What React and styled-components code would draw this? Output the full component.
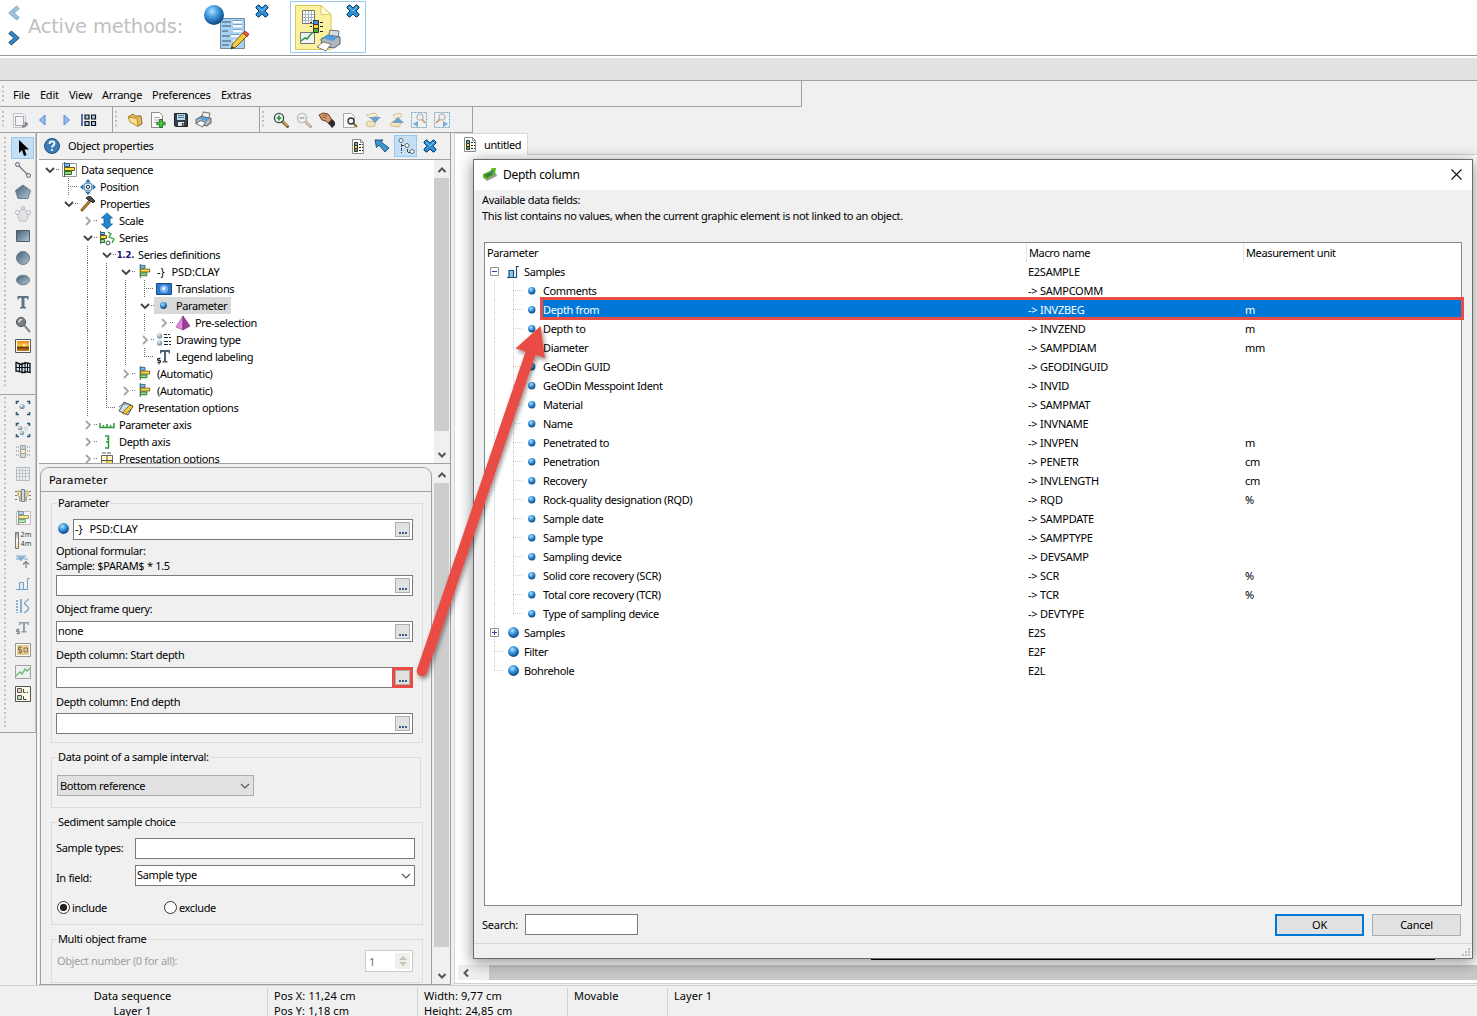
import React from 'react';
import styled, { createGlobalStyle, css } from 'styled-components';

const GlobalStyle = createGlobalStyle`
  *, *::before, *::after { box-sizing: border-box; }
  html, body { margin: 0; padding: 0; overflow: hidden; }
  body {
    background: #f0f0f0;
    color: #000;
    font-family: 'Noto Sans', 'Liberation Sans', sans-serif;
    font-size: 11px;
    line-height: 15px;
    letter-spacing: -0.37px;
    word-spacing: 0.15px;
  }
`;

/* ---------- frame ---------- */
const Window = styled.div`
  position: relative;
  width: 1477px;
  height: 1016px;
  overflow: hidden;
  display: flex;
  flex-direction: column;
  background: #f0f0f0;
  white-space: nowrap;
`;
const Svg = styled.svg`
  display: block;
  flex: none;
  overflow: visible;
  opacity: ${(p) => p.$o || 1};
`;
const Defs = styled.svg`
  position: absolute;
  width: 0;
  height: 0;
`;
const Header = styled.header`
  height: 58px;
  flex: none;
  display: flex;
  background: linear-gradient(#fff 55px, #989898 55px, #989898 56px, #fff 56px);
`;
const History = styled.div`
  width: 28px;
  padding: 6px 0 0 7px;
  display: flex;
  flex-direction: column;
  gap: 11px;
`;
const HeaderTitle = styled.div`
  width: 168px;
  padding-top: 14px;
  font: 19.5px/26px 'DejaVu Sans', 'Liberation Sans', sans-serif;
  letter-spacing: -0.25px;
  color: #bfbfbf;
`;
const Method = styled.div`
  width: 76px;
  height: 52px;
  margin: 1px 18px 0 0;
  padding: 2px 3px;
  display: flex;
  border: 1px solid ${(p) => (p.$active ? '#99c9ef' : 'transparent')};
`;
const MethodClose = styled.div`
  padding-left: ${(p) => p.$gap}px;
`;
const Band = styled.div`
  height: 23px;
  flex: none;
  background: #e2e2e2;
  border-bottom: 1px solid #a0a0a0;
`;
const MenuBar = styled.nav`
  width: 802px;
  height: 26px;
  flex: none;
  display: flex;
  align-items: center;
  padding: 2px 0 0 2px;
  letter-spacing: -0.25px;
  border: solid #a0a0a0;
  border-width: 0 1px 1px 0;
`;
const Grip = styled.div`
  flex: none;
  width: 3px;
  height: ${(p) => p.$h || 18}px;
  background-image: linear-gradient(#bcbcbc 2px, transparent 2px);
  background-size: 2px 4.500px;
  background-repeat: repeat-y;
`;
const MenuItem = styled.span`
  width: ${(p) => p.$w}px;
`;
const MenuItems = styled.div`
  display: flex;
  padding-left: 8px;
`;
const ToolRow = styled.div`
  height: 26px;
  flex: none;
  display: flex;
`;
const ToolGroup = styled.div`
  width: ${(p) => p.$w}px;
  padding-left: 2px;
  display: flex;
  align-items: center;
  border: solid #a0a0a0;
  border-width: 0 1px 1px 0;
`;
const ToolSlots = styled.div`
  display: flex;
  padding-left: ${(p) => p.$pad}px;
`;
const ToolSlot = styled.div`
  width: 23px;
  height: 22px;
  display: flex;
  align-items: center;
  justify-content: center;
  ${(p) => p.$on && css`background: #c2dff5; box-shadow: inset 0 0 0 1px #99c9ef;`}
`;
const Main = styled.main`
  height: 852px;
  flex: none;
  display: flex;
`;

/* ---------- left tool strip ---------- */
const Strip = styled.aside`
  width: 37px;
  flex: none;
  border-right: 1px solid #a0a0a0;
`;
const StripGroup = styled.div`
  height: ${(p) => p.$h}px;
  width: 36px;
  padding: ${(p) => p.$top}px 0 0 4px;
  display: flex;
  border: solid #a0a0a0;
  border-width: 0 1px 1px 0;
  border-right-color: #c4c4c4;
`;
const StripSlots = styled.div`
  padding-left: 4px;
`;

/* ---------- property panel ---------- */
const Props = styled.section`
  width: 413px;
  flex: none;
  margin-left: 1px;
  border-left: 1px solid #fff;
  border-right: 1px solid #a0a0a0;
  padding-top: 1px;
  display: flex;
  flex-direction: column;
`;
const PropsHeader = styled.div`
  height: 26px;
  flex: none;
  display: flex;
  align-items: center;
  padding: 0 0 2px 5px;
  border-bottom: 1px solid #a0a0a0;
`;
const PropsTitle = styled.div`
  width: 286px;
  padding-left: 8px;
  letter-spacing: -0.27px;
`;
const HeaderSlots = styled.div`
  display: flex;
  gap: 1px;
`;
const TreeArea = styled.div`
  height: 304px;
  flex: none;
  display: flex;
  background: #fff;
  border-bottom: 1px solid #a0a0a0;
`;
const Tree = styled.div`
  flex: 1;
  overflow: hidden;
  padding: 1px 0 0 1px;
`;
const TreeRow = styled.div`
  height: 17px;
  display: flex;
  align-items: center;
`;
const dotsV = 'repeating-linear-gradient(to bottom, #6e6e6e 0 1px, transparent 1px 2px)';
const dotsH = 'repeating-linear-gradient(to right, #6e6e6e 0 1px, transparent 1px 2px)';
const Guide = styled.div`
  width: 19px;
  height: 17px;
  flex: none;
  display: flex;
  align-items: center;
  justify-content: center;
  background-repeat: no-repeat;
  ${(p) => p.$k === 'line' && css`background-image: ${dotsV}; background-size: 1px 17px; background-position: 9px 0;`}
  ${(p) => p.$k === 'mid' && css`background-image: ${dotsV}, ${dotsH}; background-size: 1px 17px, 10px 1px; background-position: 9px 0, 9px 8px;`}
  ${(p) => p.$k === 'end' && css`background-image: ${dotsV}, ${dotsH}; background-size: 1px 9px, 10px 1px; background-position: 9px 0, 9px 8px;`}
  ${(p) => (p.$k === 'open' || p.$k === 'closed') && css`background-image: ${dotsH}; background-size: 3px 1px; background-position: 16px 8px;`}
`;
const TreeIcon = styled.div`
  width: 19px;
  flex: none;
  display: flex;
  justify-content: center;
`;
const Picked = styled.div`
  display: flex;
  align-items: center;
  height: 17px;
  padding-right: 4px;
  ${(p) => p.$on && css`background: #d9d9d9;`}
`;
const TreeLabel = styled.span`
  padding-left: 3px;
`;
const Pair = styled.span`
  display: inline-flex;
  gap: 7px;
  letter-spacing: -0.1px;
`;
const VScroll = styled.div`
  width: 16px;
  flex: none;
  padding: ${(p) => p.$top || 0}px 1px 0 0;
  background: #f0f0f0;
  display: flex;
  flex-direction: column;
`;
const ScrollBtn = styled.div`
  height: ${(p) => p.$h || 17}px;
  flex: none;
  display: flex;
  align-items: center;
  justify-content: center;
`;
const ScrollThumb = styled.div`
  height: ${(p) => p.$h}px;
  background: #cdcdcd;
`;
const Spring = styled.div`
  flex: 1;
`;
const ParamArea = styled.div`
  flex: 1;
  min-height: 0;
  display: flex;
  padding-top: 3px;
  border-bottom: 1px solid #a0a0a0;
`;
const ParamPane = styled.div`
  width: 392px;
  margin: 0 2px 0 1px;
  border: 1px solid #a0a0a0;
  border-bottom: 0;
  border-radius: 9px 9px 0 0;
  display: flex;
  flex-direction: column;
`;
const PaneTitle = styled.div`
  height: 24px;
  flex: none;
  padding: 5px 0 0 8px;
  font: 11px/16px 'DejaVu Sans', sans-serif;
  letter-spacing: 0.15px;
  border-bottom: 1px solid #a0a0a0;
`;
const Group = styled.fieldset`
  width: ${(p) => p.$w || 372}px;
  height: ${(p) => p.$h}px;
  margin: ${(p) => p.$mt}px 0 0 10px;
  min-width: 0;
  padding: 0 0 0 ${(p) => p.$pad || 4}px;
  border: 1px solid #dcdcdc;
`;
const Legend = styled.legend`
  height: 14px;
  line-height: 14px;
  padding: 0 1px;
  margin-left: ${(p) => p.$ml || 0}px;
`;
const FieldRow = styled.div`
  display: flex;
  align-items: center;
  gap: 1px;
  margin-top: ${(p) => p.$mt || 0}px;
`;
const BallSlot = styled.div`
  width: 16px;
  padding: 0 0 3px 2px;
`;
const Label = styled.div`
  height: 15px;
  line-height: 13px;
  margin-top: ${(p) => p.$mt || 0}px;
  width: ${(p) => (p.$w ? `${p.$w}px` : 'auto')};
  color: ${(p) => (p.$off ? '#a0a0a0' : '#000')};
`;
const Field = styled.div`
  width: ${(p) => p.$w}px;
  height: 21px;
  display: flex;
  align-items: center;
  justify-content: space-between;
  padding: 0 2px 0 ${(p) => (p.$grey ? 2 : 1)}px;
  background: ${(p) => (p.$grey ? '#e1e1e1' : '#fff')};
  border: 1px solid ${(p) => (p.$grey ? '#adadad' : '#7a7a7a')};
`;
const FieldText = styled.span`
  padding-bottom: 2px;
`;
const Browse = styled.div`
  width: 15px;
  height: 15px;
  flex: none;
  display: flex;
  align-items: flex-end;
  justify-content: center;
  padding-bottom: 2px;
  background: #e1e1e1;
  border: 1px solid #adadad;
  ${(p) => p.$hot && css`outline: 3px solid #e94b45; outline-offset: 0;`}
`;
const Chevron = styled.div`
  padding-right: 1px;
`;
const RadioRow = styled.div`
  display: flex;
  margin-top: 14px;
  padding-left: 1px;
`;
const RadioItem = styled.div`
  width: 107px;
  display: flex;
  align-items: center;
  gap: 2px;
`;
const Dot = styled.span`
  width: 13px;
  height: 13px;
  border: 1px solid #333;
  border-radius: 50%;
  background: ${(p) => (p.$on ? 'radial-gradient(#222 0 3.3px, #fff 4px)' : '#fff')};
`;
const Spin = styled.div`
  width: 48px;
  height: 22px;
  padding: 0 2px 0 3px;
  display: flex;
  align-items: center;
  justify-content: space-between;
  color: #6d6d6d;
  background: #fff;
  border: 1px solid #ccc;
`;
const SpinButtons = styled.div`
  width: 15px;
  height: 16px;
  background: #f0f0ea;
  display: flex;
  align-items: center;
  justify-content: center;
`;

/* ---------- document area ---------- */
const Doc = styled.section`
  flex: 1;
  display: flex;
  flex-direction: column;
  padding: 0 0 1px 3px;
`;
const Tabs = styled.div`
  height: 22px;
  flex: none;
  display: flex;
`;
const Tab = styled.div`
  width: 74px;
  display: flex;
  align-items: center;
  gap: 6px;
  padding: 0 0 1px 7px;
  background: #fff;
  border: 1px solid #d9d9d9;
  border-bottom: 0;
`;
const TabRest = styled.div`
  flex: 1;
  border-bottom: 1px solid #d0d0d0;
`;
const Sheet = styled.div`
  flex: 1;
  display: flex;
  flex-direction: column;
  justify-content: flex-end;
  background: #fff;
  border-left: 1px solid #d9d9d9;
  border-bottom: 1px solid #d0d0d0;
  padding: 0 0 3px 3px;
`;
const PageEdge = styled.div`
  width: 564px;
  height: 2px;
  margin: 0 0 5px 413px;
  background: #000;
`;
const HScroll = styled.div`
  height: 15px;
  display: flex;
  background: linear-gradient(to right, #f0f0f0 31px, #c9c9c9 31px);
`;
const HScrollBtn = styled.div`
  width: 16px;
  display: flex;
  align-items: center;
  justify-content: center;
`;
const Status = styled.footer`
  flex: 1;
  display: flex;
  border-top: 1px solid #d0d0d0;
  padding-top: 2px;
  letter-spacing: 0.06px;
`;
const StatusCell = styled.div`
  width: ${(p) => p.$w}px;
  padding: ${(p) => (p.$first ? '0 2px 0 0' : '0 0 0 6px')};
  text-align: ${(p) => (p.$first ? 'center' : 'left')};
  border-right: ${(p) => (p.$last ? 0 : 1)}px solid #d0d0d0;
`;

/* ---------- dialog ---------- */
const Dialog = styled.div`
  position: absolute;
  left: 473px;
  top: 159px;
  width: 1000px;
  height: 800px;
  display: flex;
  flex-direction: column;
  background: #f0f0f0;
  border: 1px solid #6b6b6b;
  box-shadow: 0 3px 14px 1px rgba(0, 0, 0, 0.42);
`;
const TitleBar = styled.div`
  height: 30px;
  flex: none;
  display: flex;
  align-items: center;
  justify-content: space-between;
  padding: 0 10px 2px 8px;
  background: #fff;
`;
const DialogTitle = styled.div`
  display: flex;
  align-items: center;
  gap: 5px;
  font-size: 12px;
  letter-spacing: -0.3px;
`;
const Intro = styled.div`
  height: 52px;
  flex: none;
  padding: 2px 0 0 8px;
  line-height: 16px;
`;
const Table = styled.div`
  height: 664px;
  width: 978px;
  flex: none;
  margin-left: 10px;
  background: #fff;
  border: 1px solid #828790;
`;
const TRow = styled.div`
  display: grid;
  grid-template-columns: 542px 217px 1fr;
  height: 19px;
  align-items: center;
`;
const HCell = styled.div`
  height: 19px;
  line-height: 20px;
  padding-left: 2px;
  border-right: 1px solid ${(p) => (p.$last ? 'transparent' : '#e3e3e3')};
`;
const NameCell = styled.div`
  display: flex;
  align-items: center;
  height: 19px;
`;
const Cell = styled.div`
  height: 19px;
  line-height: 19px;
  padding-left: 1px;
  letter-spacing: -0.27px;
  ${(p) => p.$on && css`background: #0078d7; color: #fff;`}
`;
const NameText = styled.div`
  flex: 1;
  height: 19px;
  line-height: 19px;
  padding-left: 2px;
  ${(p) => p.$on && css`background: #0078d7; color: #fff;`}
`;
const gV = 'repeating-linear-gradient(to bottom, #cfcfcf 0 1px, transparent 1px 2px)';
const gH = 'repeating-linear-gradient(to right, #cfcfcf 0 1px, transparent 1px 2px)';
const DGuide = styled.div`
  width: 19px;
  height: 19px;
  flex: none;
  display: flex;
  align-items: center;
  justify-content: center;
  background-repeat: no-repeat;
  ${(p) => p.$k === 'line' && css`background-image: ${gV}; background-size: 1px 19px; background-position: 9px 0;`}
  ${(p) => p.$k === 'mid' && css`background-image: ${gV}, ${gH}; background-size: 1px 19px, 10px 1px; background-position: 9px 0, 9px 9px;`}
  ${(p) => p.$k === 'end' && css`background-image: ${gV}, ${gH}; background-size: 1px 10px, 10px 1px; background-position: 9px 0, 9px 9px;`}
`;
const DIcon = styled.div`
  width: 18px;
  display: flex;
  justify-content: center;
`;
const Actions = styled.div`
  height: 37px;
  flex: none;
  display: flex;
  align-items: center;
  padding: 0 11px 0 8px;
  letter-spacing: -0.25px;
`;
const SearchLabel = styled.div`
  width: 43px;
`;
const SearchBox = styled.div`
  width: 113px;
  height: 21px;
  background: #fff;
  border: 1px solid #7a7a7a;
`;
const Button = styled.div`
  width: 89px;
  height: 22px;
  margin-left: 8px;
  display: flex;
  align-items: center;
  justify-content: center;
  background: #e1e1e1;
  border: ${(p) => (p.$main ? '2px solid #0078d7' : '1px solid #adadad')};
`;
const DialogFoot = styled.div`
  flex: 1;
  display: flex;
  align-items: flex-end;
  justify-content: flex-end;
  padding: 0 2px 2px;
  border-top: 1px solid #d7d7d7;
`;
const RowFrame = styled.div`
  position: absolute;
  left: 540px;
  top: 297px;
  width: 924px;
  height: 23px;
  border: 3px solid #e94b45;
`;
const ArrowLayer = styled.svg`
  position: absolute;
  left: 0;
  top: 0;
  pointer-events: none;
`;

/* ---------- icons ---------- */
const S = ({ s = 16, v = 16, o, children }) => (
  <Svg width={s} height={s} viewBox={`0 0 ${v} ${v}`} $o={o} fill="none">{children}</Svg>
);
const CloseX = ({ s = 14 }) => (
  <S s={s} v={14}>
    <path d="M1 3 3 1h1l3 3 3-3h1l2 2v1l-3 3 3 3v1l-2 2h-1l-3-3-3 3H3l-2-2v-1l3-3-3-3z" fill="#2f8fd6" stroke="#123f66" />
    <path d="m3 3 4 4 4-4" stroke="#7cc4f2" />
  </S>
);
const Ball = ({ s = 8 }) => (
  <S s={s} v={10}><circle cx="5" cy="5" r="4.900" fill="url(#ball)" /></S>
);
const Bars = ({ framed, s = 15, o }) => (
  <S s={s} o={o}>
    {framed && <path d="M1.500 1.500h14v13h-14z" fill="#fff" stroke="#9a9a9a" />}
    <path d="M3.500 0v15" stroke="#555" />
    <path d="M3.500 1.500h5v3h-5z" fill="#8cc0e8" stroke="#2f5f86" />
    <path d="M3.500 5.500h10v3h-10z" fill="#ffe34a" stroke="#6b5c12" />
    <path d="M3.500 9.500h7v3h-7z" fill="#8fdc84" stroke="#2f6f2c" />
  </S>
);
const LogDoc = () => (
  <S>
    <path d="M2.500 1.500h8l3 3v11h-11z" fill="#fdfdf6" stroke="#8c8c8c" />
    <path d="M10.500 1.500v3h3" stroke="#8c8c8c" />
    <path d="M4.500 4.500h3v3h-3z" fill="#5fa8e8" stroke="#333" />
    <path d="M4.500 7.500h3v3h-3z" fill="#ffd92e" stroke="#333" />
    <path d="M4.500 10.500h3v3h-3z" fill="#4fae4a" stroke="#333" />
    <path d="M9 6.500h4M9 9.500h4M9 12.500h4" stroke="#222" strokeDasharray="2 1" />
  </S>
);
const Lens = ({ children, o, c = '#7d8b95' }) => (
  <S o={o}>
    <path d="m9.500 9.500 5 5" stroke="#7a5a2c" strokeWidth="3" strokeLinecap="round" />
    <path d="m10 9.500 4.500 4.500" stroke="#d8b169" strokeWidth="1.200" />
    <circle cx="6" cy="6" r="4.600" fill="#eef6fb" stroke={c} strokeWidth="1.300" />
    {children}
  </S>
);
const Printer = ({ s = 17 }) => (
  <S s={s}>
    <path d="m8 1 6 1-1 5-7-1z" fill="#f2f4f6" stroke="#777" />
    <path d="m1 8 5-3 9 2v4l-4 3-10-3z" fill="#b5bcc3" stroke="#5d656d" />
    <path d="m3 7 3-1.500 8 2-3 2z" fill="#4fa0dd" />
    <path d="m1 12 4-3 5 1.500L7 15z" fill="#fff" stroke="#777" />
  </S>
);
const MethodEdit = () => (
  <Svg width="48" height="46" viewBox="0 0 48 46" fill="none">
    <path d="M20.500 14.500h24v30h-24z" fill="#a9d2f2" stroke="#6d8ba3" />
    <path d="M22 18h9M22 22h9M22 27h6M22 32h8M22 37h9M22 41h7" stroke="#3c536a" strokeWidth="1.200" />
    <path d="M33 18h9M33 22h9M33 27h9M31 32h8M33 37h6" stroke="#f4faff" strokeWidth="2.500" />
    <path d="M33 16.500h9M33 20.500h9M33 25.500h9M31 30.500h8" stroke="#6a8fb0" strokeWidth=".8" />
    <circle cx="14" cy="11" r="10" fill="url(#ball)" />
    <path d="m31 45 1.500-5L43 29l4 3-11 11z" fill="#f4cb3b" stroke="#7a5b12" />
    <path d="m43 29 2-2 4 3-2 3z" fill="#e05746" stroke="#8c2f24" strokeWidth=".7" />
    <path d="m31 45 1-3 2 2z" fill="#333" />
  </Svg>
);
const MethodPrint = () => (
  <Svg width="48" height="48" viewBox="0 0 48 48" fill="none">
    <path d="M1.500 1.500H27l10 9v35H1.500z" fill="#fbf2a0" stroke="#d9c95e" />
    <path d="M27 1.500v9h10z" fill="#fffce0" stroke="#d9c95e" />
    <path d="M8.500 6.500h12v13h-12z" fill="#fff" stroke="#777" />
    <path d="M11.500 7v12M14.500 7v12M17.500 7v12M9 10.500h11M9 13.500h11M9 16.500h11" stroke="#a8b6c2" />
    <path d="M6.500 28.500h14v11h-14z" fill="#eef4f8" stroke="#777" />
    <path d="m7 37 4-3 2 1 3-4 5-4" stroke="#2f9a35" strokeWidth="1.500" />
    <path d="M19.500 16.500h5v4h-5z" fill="#3f92df" stroke="#333" />
    <path d="M19.500 20.500h5v4h-5z" fill="#ffd92e" stroke="#333" />
    <path d="M19.500 24.500h5v4h-5z" fill="#47b045" stroke="#333" />
    <path d="M26 18.500h3M26 22.500h3M26 27.500h3M16 18.500h2M16 22.500h2" stroke="#222" />
    <path d="m36 26 9 1-1 8-10-1z" fill="#d9dde0" stroke="#777" />
    <path d="m27 35 7-4 12 2v7l-6 4-12-2z" fill="#aeb6bd" stroke="#555e66" />
    <path d="m28 34 6-3 10 2-5 4z" fill="#4fa0dd" />
    <path d="m23 43 6-5 8 2-5 7z" fill="#fff" stroke="#777" />
  </Svg>
);

const topIcons = {
  a: [
    <S key="1"><path d="M1.500 1.500h9l3 3v11h-12z" fill="#f4f4f4" stroke="#c4c4c4" /><path d="M3.500 4.500h8v9h-8z" stroke="#4a5f96" strokeDasharray="1 1" /><path d="M10 14.500h2l2-2" stroke="#777" strokeWidth="1.600" /><path d="m11.500 10.500 4 0 0 4z" fill="#777" /></S>,
    <S key="2"><path d="M10 3v10L4.500 8z" fill="#8fb8ee" stroke="#5f8fd4" /></S>,
    <S key="3"><path d="M6 3v10l5.500-5z" fill="#8fb8ee" stroke="#5f8fd4" /></S>,
    <S key="4"><path d="M1 2v12" stroke="#0c1f9a" strokeWidth="1.300" /><path d="M4 3h4v4H4zM10.500 3h4v4h-4zM4 9.500h4v4H4zM10.500 9.500h4v4h-4z" fill="#a8c8f0" stroke="#111" strokeWidth="1.200" /></S>,
  ],
  b: [
    <S key="1"><path d="m1 5 5-3 2 2 6 0 1 8-4 2z" fill="#e6bb57" stroke="#94702a" /><path d="m1 5 9 1.500 1 8L3 10z" fill="#ffe08c" stroke="#b08a3c" /></S>,
    <S key="2"><path d="M1.500.5h8l3 3v12h-11z" fill="#fff" stroke="#8c8c8c" /><path d="M4 5.500h6M4 8h6M4 10.500h3" stroke="#aaa" /><path d="M11 7v9M6.500 11.500h9" stroke="#1f6f1c" strokeWidth="3.600" /><path d="M11 8v7M7.500 11.500h7" stroke="#52c43f" strokeWidth="1.800" /></S>,
    <S key="3"><path d="M1.500 1.500h12l1 1v12h-12l-1-1z" fill="#34404a" stroke="#222" /><path d="M4 2h8v6H4z" fill="#b9dcf3" /><path d="M5 3.500h6M5 5.500h6" stroke="#56788f" /><path d="M5 10h6v4H5z" fill="#dfe3e6" /><path d="M9 11h1.500v3H9z" fill="#333" /></S>,
    <Printer key="4" />,
  ],
  c: [
    <Lens key="1" c="#3c4a44"><path d="M6 3.500v5M3.500 6h5" stroke="#2b9a2f" strokeWidth="1.700" /></Lens>,
    <Lens key="2" o=".5"><path d="M3.500 6h5" stroke="#555" strokeWidth="1.500" /></Lens>,
    <S key="3"><path d="m0 3 4-2 5 1 3 4 1 4-3 2-3-3-4-1z" fill="#d79a6e" stroke="#6b3f22" /><path d="m9 11 4-4 3 3v3l-3 3z" fill="#2c2c2c" /><path d="m3 5 4 1M5 8l3 2M4 3l4 1" stroke="#8c5836" strokeWidth=".8" /></S>,
    <S key="4"><path d="M1.500 1.500h8l3 3v11h-11z" fill="#f8f8f8" stroke="#aaa" /><path d="m11 11 4 4" stroke="#8b6835" strokeWidth="2" /><circle cx="9" cy="9" r="3" fill="#e5f1f8" stroke="#333" strokeWidth="1.300" /></S>,
    <S key="5" o=".75"><path d="m3 9 7 1v4l-6 1-3-2z" fill="#f3e1ae" stroke="#c9ac66" /><path d="m1 3 9-2 3 3-8 2z" fill="#f8efd2" stroke="#c9b47c" /><path d="M4 5h12l-6 6z" fill="#3f88c0" /></S>,
    <S key="6" o=".75"><path d="m2 12 3-3 8 2-2 4-8-1z" fill="#f3e1ae" stroke="#c9ac66" /><path d="m5 3 7-2 2 3-6 3z" fill="#f8efd2" stroke="#c9b47c" /><path d="M4 11h12l-6-6z" fill="#3f88c0" /></S>,
    <S key="7" o=".7"><path d="M.5.5h15v15H.5z" stroke="#3f86b5" strokeDasharray="2 1" /><circle cx="9" cy="5" r="3.200" fill="#eee" stroke="#888" /><path d="m11 7 3 4" stroke="#b48a4c" strokeWidth="2" /><path d="M7 9v6l-5-3z" fill="#3f8ecb" /></S>,
    <S key="8" o=".7"><path d="M.5.5h15v15H.5z" stroke="#3f86b5" strokeDasharray="2 1" /><circle cx="8" cy="5" r="3.200" fill="#eee" stroke="#888" /><path d="m6 7-4 4" stroke="#b48a4c" strokeWidth="2" /><path d="M9 9v6l5-3z" fill="#3f8ecb" /></S>,
  ],
};
const steel = { fill: 'url(#steel)', stroke: '#6e7d88' };
const stripA = [
  <S key="1"><path d="M4 0v13l3-3 2 6 2.500-1-2-5.500H14z" fill="#000" /></S>,
  <S key="2"><path d="m3 3 10 10" stroke="#777" strokeWidth="1.200" /><circle cx="2.500" cy="2.500" r="2" fill="#d7e4ee" stroke="#667" /><circle cx="13.500" cy="13.500" r="2" fill="#d7e4ee" stroke="#667" /></S>,
  <S key="3"><path d="m8 1 7.500 5.500-2.500 8H3L.5 6.500z" {...steel} /></S>,
  <S key="4" o=".45"><path d="m8 2 6 5-2.500 8h-7L2 7z" fill="#ccd4da" stroke="#7c8890" /><circle cx="2.500" cy="6.500" r="2" fill="#fff" stroke="#667" /><circle cx="13.500" cy="6.500" r="2" fill="#fff" stroke="#667" /><circle cx="8" cy="2" r="1.500" fill="#fff" stroke="#667" /></S>,
  <S key="5"><path d="M1.500 2.500h13v11h-13z" {...steel} stroke="#4f5f6b" /></S>,
  <S key="6"><circle cx="8" cy="8" r="6.500" {...steel} /></S>,
  <S key="7"><ellipse cx="8" cy="8" rx="6.500" ry="4.800" {...steel} /></S>,
  <S key="8"><path d="M2.500 2v3.500h1.500V4h2.500v9H5v1.500h6V13H9.500V4H12v1.500h1.500V2z" fill="#5f7383" /></S>,
  <S key="9"><path d="m9 9 6 7" stroke="#8a8a8a" strokeWidth="2.200" /><circle cx="6" cy="6" r="4.600" fill="#777e84" stroke="#555" /><path d="M4 6.500c0-2 1-3 3-3" stroke="#dfe6ea" strokeWidth="1.400" /></S>,
  <S key="10"><path d="M.5 1.500h15v13H.5z" fill="#fff" stroke="#555" /><path d="M2 3h12v10H2z" fill="url(#sunset)" /><circle cx="9" cy="7" r="1.500" fill="#fff3a0" /></S>,
  <S key="11"><path d="M1 2.500c2 0 3 2 6 2V12c-3 0-4-1-6-1zM7 3.500h3v-1l5 1v9l-5-1v1H7z" fill="#cfdfec" stroke="#111" strokeWidth="1.300" /><path d="M4.500 3v8M10 3v9M12.500 3v9M1 7.500h14" stroke="#111" /></S>,
];
const Corners = () => <path d="M1.500 4V1.500H4M12 1.500h2.500V4M1.500 12v2.500H4M14.500 12v2.500H12" stroke="#2c5873" strokeWidth="1.600" />;
const stripB = [
  <S key="1"><Corners /><circle cx="7" cy="6.500" r="2.600" fill="url(#pearl)" /></S>,
  <S key="2"><Corners /><circle cx="5" cy="6" r="2.300" fill="url(#pearl)" /><circle cx="11" cy="6.500" r="2.300" fill="#d7dee3" /><circle cx="7" cy="11" r="2.300" fill="url(#pearl)" /></S>,
  <S key="3" o=".65"><path d="M5.500 1.500h5v4h-5z" fill="#9cc8ea" stroke="#777" /><path d="M5.500 5.500h5v4h-5z" fill="#fdee9c" stroke="#777" /><path d="M5.500 9.500h5v4h-5z" fill="#b8deb0" stroke="#777" /><path d="M1 3h3M1 7h3M1 11h3M12 3h3M12 7h3M12 11h3" stroke="#444" strokeDasharray="1 1" /></S>,
  <S key="4" o=".45"><path d="M1.500 1.500h13v13h-13z" fill="#eef2f5" stroke="#6d7a85" /><path d="M4.500 2v12M7.500 2v12M10.500 2v12M2 4.500h12M2 7.500h12M2 10.500h12" stroke="#7f8e9a" /></S>,
  <S key="5" o=".7"><path d="M3 3h3v10H4.500V9L3 7.500zM13 3h-3v10h1.500V9L13 7.500z" fill="#f5dc7a" stroke="#8a7a3a" /><path d="M6.500 1.500h3v12h-3z" fill="#a8d4f0" stroke="#557" /><path d="M0 3.500h2M0 7.500h2M0 11.500h2M14 3.500h2M14 7.500h2M14 11.500h2" stroke="#444" /></S>,
  <Bars key="6" framed o=".6" s={16} />,
  null,
  <S key="8" o=".75"><path d="M1 2h10M1 5h5M9 5h4" stroke="#66899f" /><path d="M1.500 2.500h9L6 7.500z" fill="#5fa0cf" /><path d="M11 14V7.500M8 10.500 11 7.500l3 3" stroke="#555" strokeWidth="1.200" /></S>,
  <S key="9" o=".7"><path d="M1 13.500h11.500V2.500H15" stroke="#3f7fae" /><path d="M4.500 6.500h4v7h-4z" fill="#d4e9f8" stroke="#3f7fae" /></S>,
  <S key="10" o=".7"><path d="M2 1v14M6 1v14" stroke="#5b93bd" strokeWidth="2" /><path d="M2 1v14" stroke="#fff" strokeDasharray="1 2" strokeWidth="2" /><path d="M14 1c-6 4-5 5-2 7s2 4-3 7" stroke="#4b8ab8" strokeWidth="1.400" /></S>,
  <S key="11" o=".7"><path d="M4 2v3h1.500V3.500h2.500V11H6.500v1.500h5V11H10V3.500h2.500V5H14V2z" fill="#6c7d8b" /><path d="M4.500 9.500h-3v2h3v2h-3M3 8.500v6" stroke="#555" /></S>,
  <S key="12" o=".75"><path d="M.5 1.500h15v13H.5z" fill="#fff" stroke="#777" /><path d="M2 3h12v10H2z" fill="#e8bf70" /><path d="M6.500 5.500h-3v2.500h3v2.500h-3M5 4v8M9 6h3.500v4H9z" stroke="#6b4f20" /></S>,
  <S key="13" o=".65"><path d="M.5 1.500h15v13H.5z" fill="#eaf1f5" stroke="#777" /><path d="m1 12 4-4 2 2 3-5 2 2 3-3" stroke="#3fa045" strokeWidth="1.500" /></S>,
  <S key="14"><path d="M.5.5h15v15H.5z" fill="#fdfbe8" stroke="#555" /><path d="M2.500 2.500h4v4h-4z" fill="#f5c8d0" stroke="#555" /><path d="M2.500 9.500h4v4h-4z" fill="#b8e4b8" stroke="#555" /><path d="M8.500 3v3.500h2M12 6.500h1M8.500 10v3.500h3" stroke="#444" /></S>,
];
const StripScale = styled.div`
  display: flex;
  align-items: center;
  gap: 1px;
  width: 16px;
  font: 7px/9px 'DejaVu Sans', sans-serif;
  letter-spacing: -0.3px;
  color: #444;
  white-space: pre;
`;
const treeIcons = {
  seq: <Bars framed s={16} />,
  pos: <S><path d="M8 0 11 3.500H5zM8 16l3-3.500H5zM0 8l3.500-3v6zM16 8l-3.500-3v6z" fill="#2a6fae" /><path d="M4.500 4.500h7v7h-7z" fill="#d7e8f4" stroke="#5b87ad" strokeWidth=".8" /><circle cx="8" cy="8" r="1.600" fill="#fff" stroke="#334" /></S>,
  hammer: <S><path d="m2 14 8-9" stroke="#8a5a24" strokeWidth="3" strokeLinecap="round" /><path d="m2 14 8-9" stroke="#d29a55" /><path d="M6 2c2-2 5-2 6 0l3 3-2 2-2-2c-2 0-3-1-5-3z" fill="#4a4a4a" stroke="#222" /></S>,
  scale: <S><path d="m8 0 5.500 5H11v6h2.500L8 16l-5.500-5H5V5H2.500z" fill="#1f86cf" stroke="#155a8e" strokeWidth=".8" /></S>,
  series: <S><path d="M1.500 1v13" stroke="#555" /><path d="M1.500 2.500h4v2h-4z" fill="#8cc0e8" stroke="#2f5f86" /><path d="M1.500 5.500h6v3h-6z" fill="#ffe34a" stroke="#6b5c12" /><path d="M1.500 9.500h4v3h-4z" fill="#8fdc84" stroke="#2f6f2c" /><path d="m9 2 3 2-2 3 5 2-2 4" stroke="#2c9a34" strokeWidth="1.300" /><circle cx="9" cy="13" r="2" fill="#e9eef2" stroke="#555" /></S>,
  bars: <Bars />,
  trans: <S><path d="M.5 2.500h15v11H.5z" fill="#2f77cc" stroke="#174a8e" /><ellipse cx="8" cy="8" rx="4" ry="4" fill="#79b4ee" /><path d="M6 6.500 9 6v3H7z" fill="#fff" /></S>,
  ball: <Ball s={7} />,
  pyramid: <S><path d="M8 1 1 12l7 3z" fill="#e58ae0" stroke="#8f3c8c" strokeWidth=".6" /><path d="m8 1 7 10-7 4z" fill="#9a3f97" stroke="#6e286c" strokeWidth=".6" /></S>,
  draw: <S><circle cx="3.500" cy="4" r="2.700" fill="url(#pearl)" /><circle cx="3.500" cy="11" r="2.700" fill="url(#pearl)" /><path d="M8 2.500h3M12 2.500h2M8 5.500h7M8 9.500h7M8 12.500h7" stroke="#222" strokeDasharray="4 1" /></S>,
  leg: <S><path d="M4 1v3.500h1.500V3H8v9H6.500v1.500h5V12H10V3h2.500v1.500H14V1z" fill="#4d6272" /><path d="M4.500 9.500h-3v2h3v2h-3M3 8.500v7" stroke="#333" /></S>,
  pres: <S><path d="M1 11 6 2l9 4-5 9z" fill="#c9dceb" stroke="#555" /><path d="M1 7c4-4 9-4 13-1" stroke="#667" /><path d="m5 14 1-3 6-6 3 2-7 7z" fill="#f4c93b" stroke="#7a5b12" strokeWidth=".8" /></S>,
  pax: <S><path d="M1 6v4.500h14V6M4.500 8v2M8 7v3M11.500 8v2" stroke="#2f9a3a" strokeWidth="1.500" /></S>,
  dax: <S><path d="M6 2h3.500v12H6M8 5h2M7 8h2" stroke="#2f9a3a" strokeWidth="1.500" /></S>,
  grid: <S><path d="M2.500 4.500h11v11h-11z" fill="#fff8c0" stroke="#666" /><path d="M8 4v12M2 9.500h12M3 2h4M8 2h4" stroke="#555" /><path d="M8.500 10h4.500v5H8.500z" fill="#f7d94a" /></S>,
};
const NumIcon = styled.span`
  font: 900 8.500px/10px 'DejaVu Sans', sans-serif;
  letter-spacing: -0.2px;
  color: #14146e;
`;
const Caret = ({ open }) => (
  <S s={10} v={10}>
    <path d={open ? 'M1 3l4 4 4-4' : 'M3 1l4 4-4 4'} stroke={open ? '#404040' : '#a6a6a6'} strokeWidth="1.800" />
  </S>
);
const ScrollArrow = ({ d }) => (
  <S s={10} v={10}><path d={d} stroke="#555" strokeWidth="2" /></S>
);

/* indentation guides, icon and caption of every node of the property tree */
const tree = [
  [[], 'open', 'seq', 'Data sequence'],
  [[''], 'mid', 'pos', 'Position'],
  [[''], 'open', 'hammer', 'Properties'],
  [['', ''], 'closed', 'scale', 'Scale'],
  [['', ''], 'open', 'series', 'Series'],
  [['', '', 'line'], 'open', 'num', 'Series definitions'],
  [['', '', 'line', 'line'], 'open', 'bars', <Pair key="p"><span>{'-}'}</span><span>PSD:CLAY</span></Pair>],
  [['', '', 'line', 'line', 'line'], 'mid', 'trans', 'Translations'],
  [['', '', 'line', 'line', 'line'], 'open', 'ball', 'Parameter'],
  [['', '', 'line', 'line', 'line', 'line'], 'closed', 'pyramid', 'Pre-selection'],
  [['', '', 'line', 'line', 'line'], 'closed', 'draw', 'Drawing type'],
  [['', '', 'line', 'line', 'line'], 'end', 'leg', 'Legend labeling'],
  [['', '', 'line', 'line'], 'closed', 'bars', '(Automatic)'],
  [['', '', 'line', 'line'], 'closed', 'bars', '(Automatic)'],
  [['', '', 'line'], 'end', 'pres', 'Presentation options'],
  [['', ''], 'closed', 'pax', 'Parameter axis'],
  [['', ''], 'closed', 'dax', 'Depth axis'],
  [['', ''], 'closed', 'grid', 'Presentation options'],
];

const fields = [
  ['Comments', 'SAMPCOMM', ''],
  ['Depth from', 'INVZBEG', 'm'],
  ['Depth to', 'INVZEND', 'm'],
  ['Diameter', 'SAMPDIAM', 'mm'],
  ['GeODin GUID', 'GEODINGUID', ''],
  ['GeODin Messpoint Ident', 'INVID', ''],
  ['Material', 'SAMPMAT', ''],
  ['Name', 'INVNAME', ''],
  ['Penetrated to', 'INVPEN', 'm'],
  ['Penetration', 'PENETR', 'cm'],
  ['Recovery', 'INVLENGTH', 'cm'],
  ['Rock-quality designation (RQD)', 'RQD', '%'],
  ['Sample date', 'SAMPDATE', ''],
  ['Sample type', 'SAMPTYPE', ''],
  ['Sampling device', 'DEVSAMP', ''],
  ['Solid core recovery (SCR)', 'SCR', '%'],
  ['Total core recovery (TCR)', 'TCR', '%'],
  ['Type of sampling device', 'DEVTYPE', ''],
];
const roots = [['Samples', 'E2S', 'plus'], ['Filter', 'E2F', 'mid'], ['Bohrehole', 'E2L', 'end']];

const BrowseField = ({ w = 357, hot, children }) => (
  <Field $w={w}>
    <FieldText>{children}</FieldText>
    <Browse $hot={hot}>
      <Svg width="8" height="2" viewBox="0 0 8 2"><path d="M0 0h2v2H0zM3 0h2v2H3zM6 0h2v2H6z" fill="#3d5d85" /></Svg>
    </Browse>
  </Field>
);
const Toggle = ({ plus }) => (
  <S s={9} v={9}>
    <path d="M.5.5h8v8h-8z" fill="#fbfbfb" stroke="#919191" />
    <path d={plus ? 'M2 4.500h5M4.500 2v5' : 'M2 4.500h5'} stroke="#33478f" />
  </S>
);
const DownChevron = () => (
  <Chevron><S s={10} v={10}><path d="m1 3 4 4 4-4" stroke="#555" strokeWidth="1.200" /></S></Chevron>
);

export default function App() {
  return (
    <Window>
      <GlobalStyle />
      <Defs>
        <defs>
          <radialGradient id="ball" cx=".4" cy=".32" r=".72"><stop offset="0" stopColor="#b5e2ff" /><stop offset=".4" stopColor="#459fe4" /><stop offset=".8" stopColor="#175c9e" /><stop offset="1" stopColor="#0e3f70" /></radialGradient>
          <radialGradient id="pearl" cx=".38" cy=".3" r=".8"><stop offset="0" stopColor="#e6eff5" /><stop offset="1" stopColor="#56758c" /></radialGradient>
          <linearGradient id="steel" x2="1" y2="1"><stop offset="0" stopColor="#3e5d75" /><stop offset="1" stopColor="#b3c6d4" /></linearGradient>
          <linearGradient id="sunset" x2="0" y2="1"><stop offset="0" stopColor="#e8871a" /><stop offset=".5" stopColor="#ffc94d" /><stop offset=".6" stopColor="#6b3205" /><stop offset="1" stopColor="#d9801e" /></linearGradient>
          <linearGradient id="ruler" x2="0" y2="1"><stop offset="0" stopColor="#999" /><stop offset=".5" stopColor="#fff" /><stop offset="1" stopColor="#e8d58a" /></linearGradient>
        </defs>
      </Defs>

      <Header>
        <History>
          <S s={14} o=".55"><path d="M11 0 14 3 8 8l6 5-3 3L2 8z" fill="#4a93c8" stroke="#274f6e" /></S>
          <S s={14}><path d="M5 0 2 3l6 5-6 5 3 3L14 8z" fill="#2f86c8" stroke="#173f60" /></S>
        </History>
        <HeaderTitle>Active methods:</HeaderTitle>
        <Method><MethodEdit /><MethodClose $gap={7}><CloseX /></MethodClose></Method>
        <Method $active><MethodPrint /><MethodClose $gap={4}><CloseX /></MethodClose></Method>
      </Header>
      <Band />
      <MenuBar>
        <Grip />
        <MenuItems>
          <MenuItem $w={27}>File</MenuItem>
          <MenuItem $w={29}>Edit</MenuItem>
          <MenuItem $w={33}>View</MenuItem>
          <MenuItem $w={50}>Arrange</MenuItem>
          <MenuItem $w={69}>Preferences</MenuItem>
          <MenuItem $w={40}>Extras</MenuItem>
        </MenuItems>
      </MenuBar>
      <ToolRow>
        <ToolGroup $w={113}><Grip /><ToolSlots $pad={3}>{topIcons.a.map((i, n) => <ToolSlot key={n}>{i}</ToolSlot>)}</ToolSlots></ToolGroup>
        <ToolGroup $w={147}><Grip /><ToolSlots $pad={5}>{topIcons.b.map((i, n) => <ToolSlot key={n}>{i}</ToolSlot>)}</ToolSlots></ToolGroup>
        <ToolGroup $w={213}><Grip /><ToolSlots $pad={4}>{topIcons.c.map((i, n) => <ToolSlot key={n}>{i}</ToolSlot>)}</ToolSlots></ToolGroup>
      </ToolRow>

      <Main>
        <Strip>
          <StripGroup $h={262} $top={4}>
            <Grip $h={250} />
            <StripSlots>{stripA.map((i, n) => <ToolSlot key={n} $on={n === 0}>{i}</ToolSlot>)}</StripSlots>
          </StripGroup>
          <StripGroup $h={338} $top={2}>
            <Grip $h={330} />
            <StripSlots>
              {stripB.map((i, n) => (
                <ToolSlot key={n}>
                  {n === 6 ? <StripScale><Svg width="5" height="17" viewBox="0 0 5 17"><path d="M.5.5h3v16h-3z" fill="url(#ruler)" stroke="#777" /></Svg>{'2m\n4m'}</StripScale> : i}
                </ToolSlot>
              ))}
            </StripSlots>
          </StripGroup>
        </Strip>

        <Props>
          <PropsHeader>
            <S><circle cx="8" cy="8" r="7.500" fill="#3a7fb8" stroke="#1f4f78" /><path d="M5.500 6c0-3.500 5-3.500 5-.5 0 2-2.500 2-2.500 4M8 11v1.800" stroke="#fff" strokeWidth="1.800" /></S>
            <PropsTitle>Object properties</PropsTitle>
            <HeaderSlots>
              <ToolSlot><LogDoc /></ToolSlot>
              <ToolSlot><S><path d="M1 2h8L7 4l8 6-4 4-6-7-2.500 2.500z" fill="#3f95d2" stroke="#1c557f" /></S></ToolSlot>
              <ToolSlot $on><S><circle cx="3" cy="2.500" r="2" fill="#fff" stroke="#666" /><circle cx="9" cy="7.500" r="2" fill="#fff" stroke="#666" /><circle cx="14" cy="13.500" r="2" fill="#fff" stroke="#666" /><path d="M3.500 6v9M4 7.500h2M9.500 11v3.500H12" stroke="#444" strokeDasharray="3 1" /></S></ToolSlot>
              <ToolSlot><CloseX /></ToolSlot>
            </HeaderSlots>
          </PropsHeader>
          <TreeArea>
            <Tree>
              {tree.map(([guides, own, icon, label], n) => (
                <TreeRow key={n}>
                  {guides.map((g, k) => <Guide key={k} $k={g} />)}
                  <Guide $k={own}>{(own === 'open' || own === 'closed') && <Caret open={own === 'open'} />}</Guide>
                  <Picked $on={label === 'Parameter'}>
                    <TreeIcon>{icon === 'num' ? <NumIcon>1.2.</NumIcon> : treeIcons[icon]}</TreeIcon>
                    <TreeLabel>{label}</TreeLabel>
                  </Picked>
                </TreeRow>
              ))}
            </Tree>
            <VScroll $top={1}>
              <ScrollBtn><ScrollArrow d="m1.500 7 3.500-3.500L8.500 7" /></ScrollBtn>
              <ScrollThumb $h={253} />
              <Spring />
              <ScrollBtn><ScrollArrow d="m1.500 3 3.500 3.500L8.500 3" /></ScrollBtn>
            </VScroll>
          </TreeArea>
          <ParamArea>
            <ParamPane>
              <PaneTitle>Parameter</PaneTitle>
              <Group $h={247} $mt={4}>
                <Legend $ml={1}>Parameter</Legend>
                <FieldRow $mt={9}>
                  <BallSlot><Ball s={11} /></BallSlot>
                  <BrowseField w={340}><Pair><span>{'-}'}</span><span>PSD:CLAY</span></Pair></BrowseField>
                </FieldRow>
                <Label $mt={4}>Optional formular:</Label>
                <Label>Sample: $PARAM$ * 1.5</Label>
                <FieldRow $mt={1}><BrowseField /></FieldRow>
                <Label $mt={6}>Object frame query:</Label>
                <FieldRow $mt={4}><BrowseField>none</BrowseField></FieldRow>
                <Label $mt={6}>Depth column: Start depth</Label>
                <FieldRow $mt={4}><BrowseField hot /></FieldRow>
                <Label $mt={7}>Depth column: End depth</Label>
                <FieldRow $mt={3}><BrowseField /></FieldRow>
              </Group>
              <Group $w={370} $h={58} $mt={7} $pad={5}>
                <Legend>Data point of a sample interval:</Legend>
                <FieldRow $mt={11}><Field $w={197} $grey><span>Bottom reference</span><DownChevron /></Field></FieldRow>
              </Group>
              <Group $h={110} $mt={7}>
                <Legend $ml={1}>Sediment sample choice</Legend>
                <FieldRow $mt={9}><Label $w={78}>Sample types:</Label><Field $w={280} /></FieldRow>
                <FieldRow $mt={6}><Label $w={78} $mt={6}>In field:</Label><Field $w={280}><FieldText>Sample type</FieldText><DownChevron /></Field></FieldRow>
                <RadioRow>
                  <RadioItem><Dot $on />include</RadioItem>
                  <RadioItem><Dot />exclude</RadioItem>
                </RadioRow>
              </Group>
              <Group $h={51} $mt={7} $pad={5}>
                <Legend>Multi object frame</Legend>
                <FieldRow $mt={4}>
                  <Label $w={307} $off>Object number (0 for all):</Label>
                  <Spin>1<SpinButtons><S s={12} v={12}><path d="M2 5 6 1l4 4zM2 7l4 4 4-4z" fill="#c6c6c0" /></S></SpinButtons></Spin>
                </FieldRow>
              </Group>
            </ParamPane>
            <VScroll>
              <ScrollBtn $h={16}><ScrollArrow d="m1.500 7 3.500-3.500L8.500 7" /></ScrollBtn>
              <ScrollThumb $h={464} />
              <Spring />
              <ScrollBtn><ScrollArrow d="m1.500 3 3.500 3.500L8.500 3" /></ScrollBtn>
            </VScroll>
          </ParamArea>
        </Props>

        <Doc>
          <Tabs><Tab><LogDoc />untitled</Tab><TabRest /></Tabs>
          <Sheet>
            <PageEdge />
            <HScroll><HScrollBtn><ScrollArrow d="M7 1.500 3.500 5 7 8.500" /></HScrollBtn></HScroll>
          </Sheet>
        </Doc>
      </Main>

      <Status>
        <StatusCell $w={268} $first>Data sequence<br />Layer 1</StatusCell>
        <StatusCell $w={150}>Pos X: 11,24 cm<br />Pos Y: 1,18 cm</StatusCell>
        <StatusCell $w={150}>Width: 9,77 cm<br />Height: 24,85 cm</StatusCell>
        <StatusCell $w={100}>Movable</StatusCell>
        <StatusCell $w={200} $last>Layer 1</StatusCell>
      </Status>

      <Dialog>
        <TitleBar>
          <DialogTitle>
            <S><path d="m1 11 4 4 10-5-1-3z" fill="#9a9a9a" /><path d="m1 8 7-3 2-3 4 0-1 6-8 5-4-1z" fill="#5fb81c" /><path d="m2 9 5-2 4 1-6 4z" fill="#2f8a1a" /><path d="m7 9 4-4" stroke="#2f5fc0" strokeWidth="1.500" /></S>
            Depth column
          </DialogTitle>
          <S s={11} v={11}><path d="m.5.5 10 10M10.500.5l-10 10" stroke="#111" strokeWidth="1.100" /></S>
        </TitleBar>
        <Intro>Available data fields:<br />This list contains no values, when the current graphic element is not linked to an object.</Intro>
        <Table>
          <TRow><HCell>Parameter</HCell><HCell>Macro name</HCell><HCell $last>Measurement unit</HCell></TRow>
          <TRow>
            <NameCell>
              <DGuide><Toggle /></DGuide>
              <DIcon><S s={14} v={14}><path d="M1 12.500h9.500V1.500H13" stroke="#1b4f7a" strokeWidth="1.200" /><path d="M3 5.500h4.500v7H3z" fill="#8fc4ea" stroke="#1b4f7a" strokeWidth="1.200" /></S></DIcon>
              <NameText>Samples</NameText>
            </NameCell>
            <Cell>E2SAMPLE</Cell><Cell />
          </TRow>
          {fields.map(([name, macro, unit], n) => (
            <TRow key={name}>
              <NameCell>
                <DGuide $k="line" />
                <DGuide $k={n === fields.length - 1 ? 'end' : 'mid'} />
                <DIcon><Ball s={7.5} /></DIcon>
                <NameText $on={n === 1}>{name}</NameText>
              </NameCell>
              <Cell $on={n === 1}>{'-> ' + macro}</Cell>
              <Cell $on={n === 1}>{unit}</Cell>
            </TRow>
          ))}
          {roots.map(([name, macro, kind]) => (
            <TRow key={macro}>
              <NameCell>
                <DGuide $k={kind === 'plus' ? 'line' : kind}>{kind === 'plus' && <Toggle plus />}</DGuide>
                <DIcon><Ball s={11} /></DIcon>
                <NameText>{name}</NameText>
              </NameCell>
              <Cell>{macro}</Cell><Cell />
            </TRow>
          ))}
        </Table>
        <Actions>
          <SearchLabel>Search:</SearchLabel><SearchBox /><Spring /><Button $main>OK</Button><Button>Cancel</Button>
        </Actions>
        <DialogFoot>
          <S s={8} v={8}><path d="M6 0h2v2H6zM6 3h2v2H6zM6 6h2v2H6zM3 3h2v2H3zM3 6h2v2H3zM0 6h2v2H0z" fill="#bcbcbc" /></S>
        </DialogFoot>
      </Dialog>

      <RowFrame />
      <ArrowLayer width="1477" height="1016" viewBox="0 0 1477 1016">
        <defs>
          <filter id="soft" x="-20%" y="-5%" width="140%" height="112%"><feDropShadow dx="1.500" dy="2.500" stdDeviation="2.200" floodColor="#000" floodOpacity=".45" /></filter>
        </defs>
        <g filter="url(#soft)" fill="#e94b45">
          <path d="M422 671 531 352" stroke="#e94b45" strokeWidth="10.500" strokeLinecap="round" />
          <path d="M540.500 326 545 358 515.500 348.500z" />
        </g>
      </ArrowLayer>
    </Window>
  );
}
